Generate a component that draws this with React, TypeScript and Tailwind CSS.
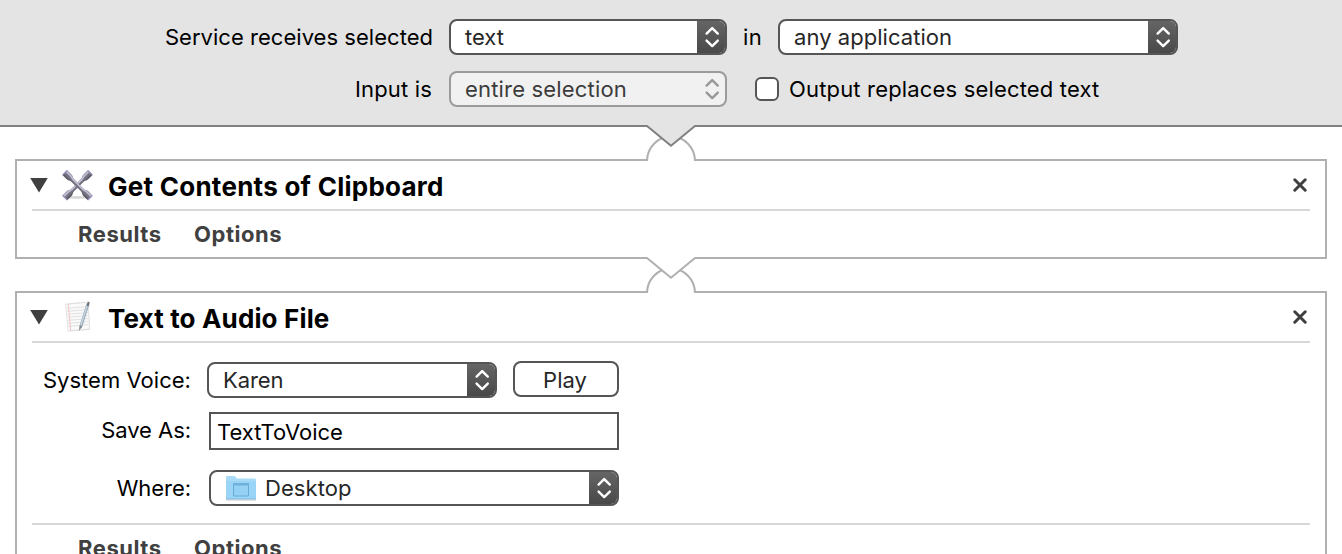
import type { ReactNode } from "react";
import clsx from "clsx";

function Chevrons({ color }: { color: string }) {
  return (
    <svg className="mr-px" width="16" height="24" viewBox="0 0 16 24" fill="none" stroke={color} strokeWidth="2.4" strokeLinecap="round" strokeLinejoin="round">
      <path d="M2.6 8.6 8.2 3.1l5.6 5.5M2.6 15.6l5.6 5.5 5.6-5.5" />
    </svg>
  );
}

function Select({ className, disabled, children }: { className: string; disabled?: boolean; children: ReactNode }) {
  return (
    <button
      type="button"
      disabled={disabled}
      className={clsx(
        "flex h-9 shrink-0 items-center overflow-hidden rounded-[8px] border-2 text-left",
        disabled ? "border-[#9b9b9b] bg-[#f1f1f1] text-[#3c3c3c]" : "border-[#555555] bg-white text-[#262626]",
        className,
      )}
    >
      <span className="flex flex-1 items-center">{children}</span>
      <span
        className={clsx(
          "-my-0.5 -mr-0.5 flex h-9 w-[30px] items-center justify-center",
          !disabled && "bg-linear-to-b from-[#676767] to-[#474747]",
        )}
      >
        <Chevrons color={disabled ? "#999999" : "#ffffff"} />
      </span>
    </button>
  );
}

function Connector({ stroke, fill }: { stroke: string; fill: string }) {
  return (
    <svg className="absolute -bottom-[37px] left-1/2 z-10 -translate-x-1/2" width="56" height="38" viewBox="0 0 56 38" fill="none">
      <path d="M5 38V35h46v3z" fill="#fff" />
      <path d="M4 37a24 24.5 0 0 1 48 0" fill="#fff" stroke="#b0b0b0" strokeWidth="2" />
      <path d="M4 0v2l24 20L52 2V0z" fill={fill} />
      <path d="M3.6 2h.4l24 19.8L52 2h.4" stroke={stroke} strokeWidth="2" />
    </svg>
  );
}

function Wrench({ angle }: { angle: string }) {
  return (
    <g transform={angle}>
      <path
        d="M-2 12.6h6.6c1.8 0 2.6 1.5 4.6 1.5h13.6c2 0 2.800-1.500 4.600-1.500H34v6.800h-6.600c-1.800 0-2.600-1.500-4.600-1.500H9.200c-2 0-2.800 1.500-4.600 1.500H-2z"
        fill="url(#steel)"
      />
      <path d="M-1.200 14.200h5.800l4.600 1h13.600l4.600-1h5.800" fill="none" stroke="#c6c5d8" strokeWidth="1.400" />
      <path d="M-1.800 12.800v6.400M33.800 12.800v6.400" stroke="#9a93c0" strokeWidth="1.200" />
    </g>
  );
}

function ToolsIcon() {
  return (
    <svg width="32" height="32" viewBox="0 0 32 32">
      <defs>
        <linearGradient id="steel" x1="0" x2="0" y1="0" y2="1">
          <stop offset="0" stopColor="#a19db8" />
          <stop offset=".5" stopColor="#7b7987" />
          <stop offset="1" stopColor="#55535f" />
        </linearGradient>
      </defs>
      <ellipse cx="15.500" cy="28.400" rx="11" ry="1.500" fill="#dadada" />
      <Wrench angle="translate(-.5 .2) rotate(-45 16 16)" />
      <Wrench angle="translate(-.5 .2) rotate(45 16 16)" />
    </svg>
  );
}

function NotepadIcon() {
  return (
    <svg width="32" height="32" viewBox="0 0 32 32" fill="none">
      <path d="M4 3.7 26.300 1.500l1.700 27.300L6.400 30.500z" fill="#d6d6d6" />
      <path d="M3.400 3.200 26.100 1l1.500 27L6.200 29.800z" fill="#fafafa" stroke="#e0e0e0" strokeWidth=".8" />
      <path
        d="m4.500 7.300 21-1.700M4.800 10.300l20.900-1.700M5 13.300l20.900-1.700M5.300 16.300l20.800-1.700M5.600 19.300l20.800-1.700M5.900 22.300l20.700-1.700M6.100 25.300l20.700-1.700"
        stroke="#dddfe1"
        strokeWidth=".9"
      />
      <path d="m6.300 3.200 2.400 26.200" stroke="#f6c0c0" strokeWidth=".9" />
      <path d="m4.500 3.200 19-1.800" stroke="#cfcfcf" strokeWidth=".8" strokeDasharray="1.400 1" />
      <path d="m25.900 3.200-7 22" stroke="#9aabb9" strokeWidth="2.900" strokeLinecap="round" />
      <path d="m25.400 4.200-6.500 20" stroke="#cfe0eb" strokeWidth="1.100" />
      <path d="m26.600 1.800-.7 2.400" stroke="#69747f" strokeWidth="2" strokeLinecap="round" />
      <path d="m17.600 24.800 2.500.9-3.200 4.300z" fill="#7f878f" />
    </svg>
  );
}

function FolderIcon() {
  return (
    <svg width="32" height="28" viewBox="0 0 32 28" fill="none">
      <path d="M1 25.2h30v1.200H1z" fill="#c9c4c0" />
      <path d="M1 3.400C1 2.600 1.500 2 2.300 2h7.200c1 0 1.600 2.600 3 2.600h17.200c.8 0 1.300.6 1.300 1.400v19H1z" fill="#a9dbf6" />
      <path d="M1 7h30v17.300c0 .6-.4 1-1 1H2c-.6 0-1-.4-1-1z" fill="#9ad5f8" />
      <path d="M1 24.800h30" stroke="#80bfe6" strokeWidth=".9" />
      <path d="M8.500 9.500h15V22h-15z" fill="#95d1f5" stroke="#66abd6" />
      <path d="M8 9h16v2.500H8z" fill="#6fb1da" />
    </svg>
  );
}

function CardHeader({ icon, title }: { icon: ReactNode; title: ReactNode }) {
  return (
    <div className="mx-[15px] flex h-[50px] items-center border-b-2 border-[#d7d7d7]">
      <svg className="-ml-0.5 shrink-0" width="18" height="16" viewBox="0 0 18 16">
        <path d="M.2 1h17.600L9 15.600z" fill="#404040" />
      </svg>
      <span className="ml-[14px] w-8 shrink-0">{icon}</span>
      <h2 className="ml-[14px] flex-1 pt-1 text-[26px] leading-8 font-bold text-black">{title}</h2>
      <button type="button" aria-label="Remove" className="mr-[3px]">
        <svg width="14" height="14" viewBox="0 0 14 14" fill="none" stroke="#3f3f3f" strokeWidth="3" strokeLinecap="round">
          <path d="m1.800 1.800 10.400 10.400M12.200 1.800 1.800 12.200" />
        </svg>
      </button>
    </div>
  );
}

function CardFooter() {
  return (
    <div className="flex h-[46px] items-center pl-[61px] font-bold text-[#404040]">
      <span className="w-[116px] tracking-[0.55px]">Results</span>
      <span className="tracking-[0.55px]">Options</span>
    </div>
  );
}

export default function App() {
  return (
    <div className="flex h-[554px] w-[1342px] flex-col overflow-hidden bg-white font-['Inter',sans-serif] text-[22px] leading-7 text-black">
      <header className="relative h-[127px] shrink-0 border-b-2 border-[#808080] bg-[#e4e4e4] pt-[19px]">
        <div className="flex h-9 items-center gap-4">
          <span className="w-[433px] text-right tracking-[0.03px]">Service receives selected</span>
          <Select className="w-[278px] pl-[14px]">text</Select>
          <span className="w-[19px] tracking-[0.4px]">in</span>
          <Select className="w-[400px] pl-[14px] tracking-[0.05px]">any application</Select>
        </div>
        <div className="mt-4 flex h-9 items-center">
          <span className="mr-4 w-[433px] pr-px text-right tracking-[0.17px]">Input is</span>
          <Select disabled className="w-[278px] pl-[14px] tracking-[0.18px]">
            entire selection
          </Select>
          <span className="ml-7 size-6 rounded-[6px] border-2 border-[#555555] bg-white" />
          <span className="ml-[10px] tracking-[0.17px]">Output replaces selected text</span>
        </div>
        <div className="absolute inset-x-0 bottom-0">
          <Connector stroke="#808080" fill="#e4e4e4" />
        </div>
      </header>

      <main className="flex flex-col gap-8 px-[15px] pt-8">
        <section className="relative h-[100px] shrink-0 border-2 border-[#b0b0b0] bg-white">
          <CardHeader icon={<ToolsIcon />} title={<span className="tracking-[0.26px]">Get Contents of Clipboard</span>} />
          <CardFooter />
          <div className="absolute inset-x-0 bottom-0">
            <Connector stroke="#b0b0b0" fill="#ffffff" />
          </div>
        </section>

        <section className="h-[300px] shrink-0 border-2 border-[#b0b0b0] bg-white">
          <CardHeader icon={<NotepadIcon />} title={<span className="tracking-[0.15px]">Text to Audio File</span>} />
          <div className="mx-[15px] h-[182px] border-b-2 border-[#d7d7d7] pt-[18px]">
            <div className="flex h-[37px] items-center">
              <span className="w-[160px] pr-px text-right tracking-[0.03px]">System Voice:</span>
              <Select className="ml-[15px] w-[290px] pl-[14px] tracking-[-0.09px]">Karen</Select>
              <button type="button" className="mb-px ml-4 h-9 w-[106px] rounded-[8px] border-2 border-[#555555] bg-white pt-0.5 pr-0.5 text-[#262626]">
                Play
              </button>
            </div>
            <div className="mt-[14px] flex h-[38px] items-center">
              <span className="w-[160px] pr-px pb-0.5 text-right tracking-[-0.05px]">Save As:</span>
              <span className="ml-[17px] flex h-[38px] w-[410px] items-center border-2 border-[#555555] pt-px pl-[6px] tracking-[-0.04px]">
                TextToVoice
              </span>
            </div>
            <div className="mt-5 flex h-9 items-center">
              <span className="w-[160px] pr-px text-right tracking-[-0.05px]">Where:</span>
              <Select className="ml-[17px] w-[410px] pl-[14px]">
                <FolderIcon />
                <span className="ml-2 tracking-[0.07px]">Desktop</span>
              </Select>
            </div>
          </div>
          <CardFooter />
        </section>
      </main>
    </div>
  );
}
